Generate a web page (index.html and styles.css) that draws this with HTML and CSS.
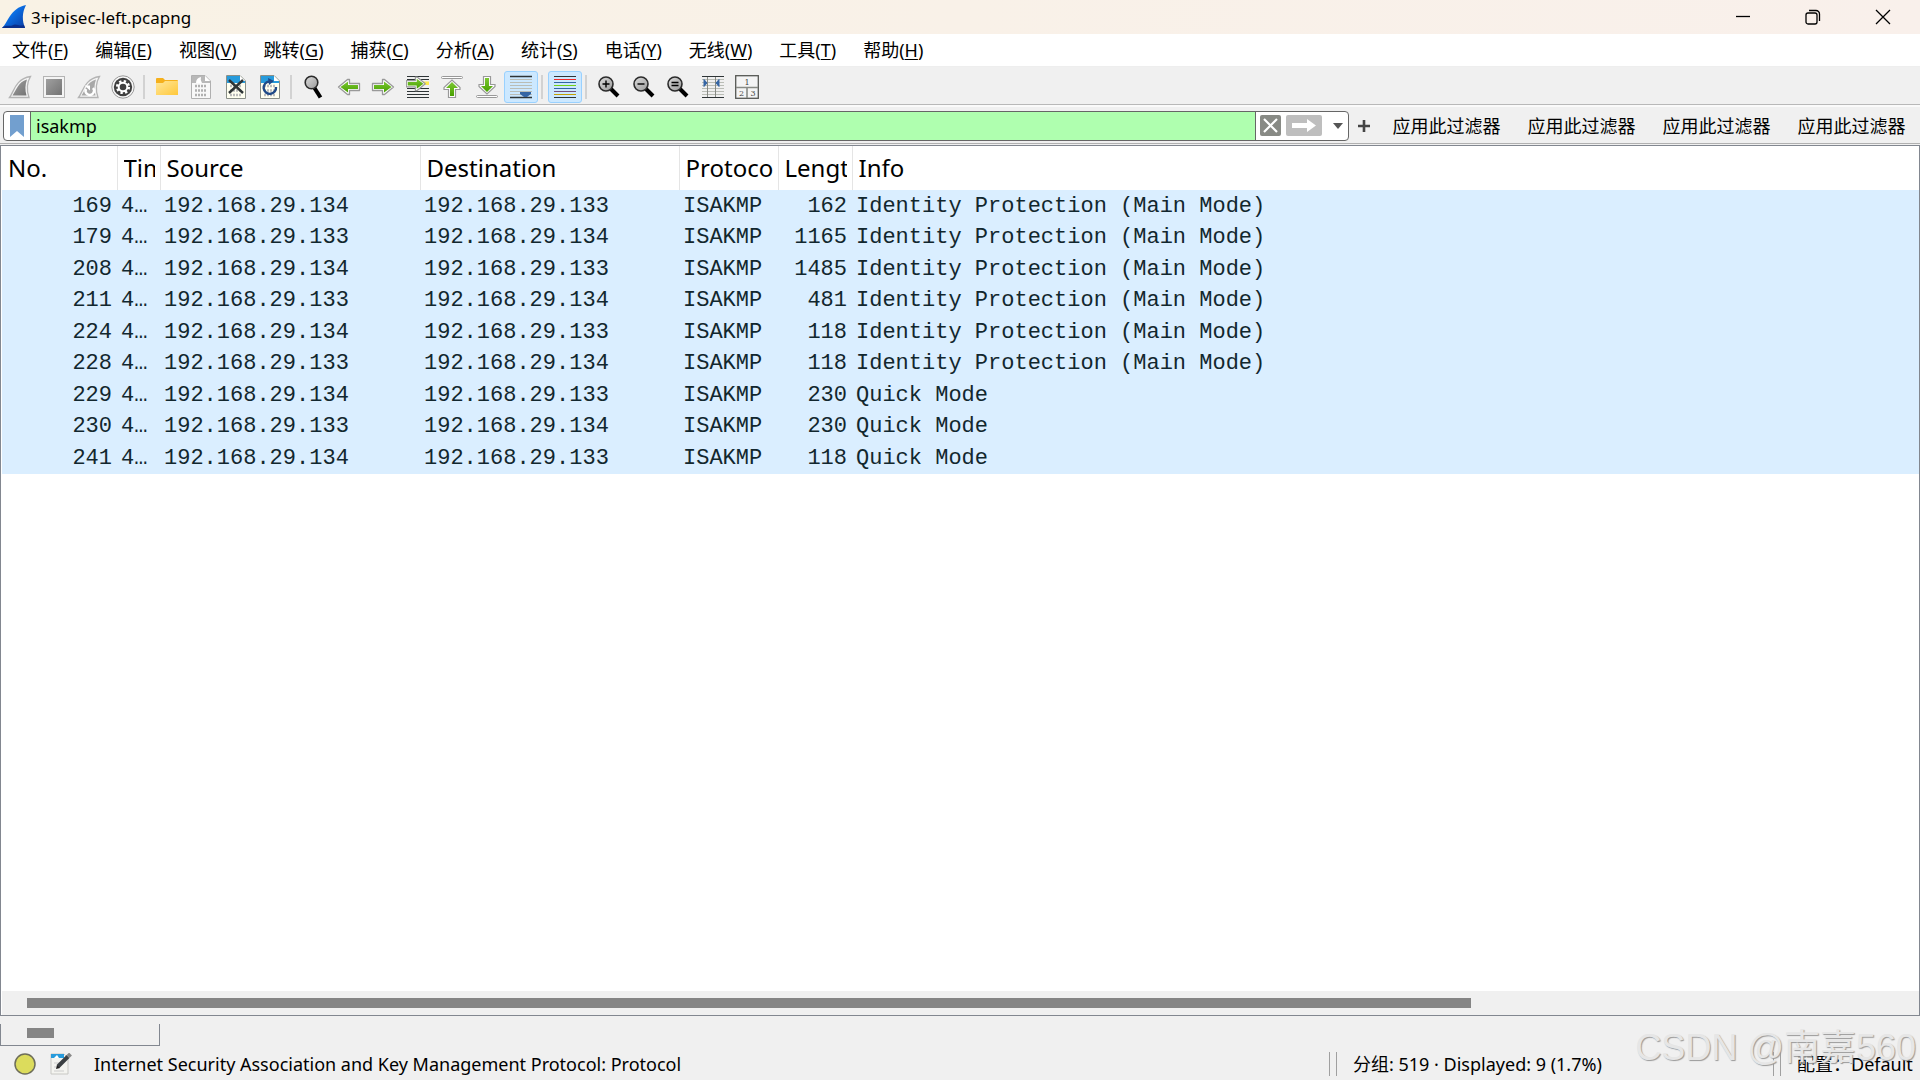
FILE: index.html
```html
<!DOCTYPE html>
<html lang="zh-CN">
<head>
<meta charset="utf-8">
<title>3+ipisec-left.pcapng</title>
<link rel="stylesheet" href="styles.css">
</head>
<body>
<svg class="defs" width="0" height="0" aria-hidden="true">
  <defs>
    <linearGradient id="blue" x1="0" y1="0" x2="1" y2="1"><stop offset="0" stop-color="#3aa0f5"/><stop offset=".45" stop-color="#0a6be0"/><stop offset="1" stop-color="#0b3aa0"/></linearGradient>
    <linearGradient id="grey" x1="0" y1="0" x2="1" y2="1"><stop offset="0" stop-color="#a0a0a0"/><stop offset="1" stop-color="#737373"/></linearGradient>
    <linearGradient id="green" x1="0" y1="0" x2="0" y2="1"><stop offset="0" stop-color="#7cc832"/><stop offset="1" stop-color="#48a000"/></linearGradient>
    <linearGradient id="gold" x1="0" y1="0" x2="1" y2="1"><stop offset="0" stop-color="#ffe79b"/><stop offset="1" stop-color="#ffc83a"/></linearGradient>
    <linearGradient id="glass" x1="0" y1="0" x2="1" y2="1"><stop offset="0" stop-color="#dcdcdc"/><stop offset="1" stop-color="#9a9a9a"/></linearGradient>
    <symbol id="lens" viewBox="0 0 24 24">
      <path d="M14 14l7 7" stroke="#000" stroke-width="4" fill="none"/>
      <circle cx="9" cy="9" r="7" fill="url(#glass)" stroke="#2b2b2b" stroke-width="1.600"/>
    </symbol>
    <symbol id="arrow" viewBox="0 0 24 24">
      <path d="M1.500 8.500H11.500V4.500H13.500L22.500 12L13.500 19.500H11.500V15.500H1.500Z" fill="#fff" stroke="#999" stroke-width="1.300" stroke-linejoin="round"/>
      <path d="M3 10H13V6.500L20.500 12L13 17.500V14H3Z" fill="url(#green)"/>
    </symbol>
  </defs>
</svg>
<div class="window">
  <header class="titlebar">
    <svg class="app-icon" viewBox="0 0 24 24"><path d="M0 23C6 18 8 3 24 0C20 8 20 15 23 23Z" fill="url(#blue)"/><path d="M0 23C3 19 8 22 11 20S18 22 22 20L23 23Z" fill="#0a2f8c"/></svg>
    <h1 class="title">3+ipisec-left.pcapng</h1>
    <div class="window-buttons">
      <button class="window-button" aria-label="最小化"><svg viewBox="0 0 16 16"><path d="M1 7.500H15" class="glyph"/></svg></button>
      <button class="window-button" aria-label="还原"><svg viewBox="0 0 16 16"><rect x="1" y="4" width="11" height="11" rx="2" class="glyph"/><path d="M4 1.500H11A3.500 3.500 0 0 1 14.500 5V12" class="glyph"/></svg></button>
      <button class="window-button" aria-label="关闭"><svg viewBox="0 0 16 16"><path d="M1 1L15 15M15 1L1 15" class="glyph"/></svg></button>
    </div>
  </header>

  <nav class="menubar">
    <button class="menu">文件(<u>F</u>)</button>
    <button class="menu">编辑(<u>E</u>)</button>
    <button class="menu">视图(<u>V</u>)</button>
    <button class="menu">跳转(<u>G</u>)</button>
    <button class="menu">捕获(<u>C</u>)</button>
    <button class="menu">分析(<u>A</u>)</button>
    <button class="menu">统计(<u>S</u>)</button>
    <button class="menu">电话(<u>Y</u>)</button>
    <button class="menu">无线(<u>W</u>)</button>
    <button class="menu">工具(<u>T</u>)</button>
    <button class="menu">帮助(<u>H</u>)</button>
  </nav>

  <div class="toolbar" role="toolbar">
    <div class="group group-4">
      <button class="tool" aria-label="开始捕获"><svg viewBox="0 0 24 24"><path d="M1.500 22.500C6 17 7 4 22.500 1.500C18.500 8 18.500 15 21 22.500Z" fill="#f4f4f4" stroke="#b4b4b4" stroke-width="1.300"/><path d="M4.500 20.500C8.500 15 10 7 19 4.500C17 10 17 15 18.500 20.500Z" fill="url(#grey)"/></svg></button>
      <button class="tool" aria-label="停止捕获"><svg viewBox="0 0 24 24"><rect x="1.500" y="1.500" width="21" height="21" fill="#f4f4f4" stroke="#b4b4b4"/><rect x="4" y="4" width="16" height="16" fill="url(#grey)"/></svg></button>
      <button class="tool" aria-label="重新开始捕获"><svg viewBox="0 0 24 24"><path d="M1.500 22.500C6 17 7 4 22.500 1.500C18.500 8 18.500 15 21 22.500Z" fill="#f4f4f4" stroke="#b4b4b4" stroke-width="1.300"/><path d="M4.500 20.500C8.500 15 10 7 19 4.500C17 10 17 15 18.500 20.500Z" fill="#a8a8a8"/><path d="M9 14A4.200 4.200 0 1 0 16 13" fill="none" stroke="#fff" stroke-width="2.400"/><path d="M7.500 10.500H13V15.500Z" fill="#fff"/></svg></button>
      <button class="tool" aria-label="捕获选项"><svg viewBox="0 0 24 24"><circle cx="12" cy="12" r="11.200" fill="#f8f8f8" stroke="#999"/><circle cx="12" cy="12" r="9.200" fill="#404040"/><circle cx="12" cy="12" r="5.600" fill="none" stroke="#fff" stroke-width="3" stroke-dasharray="2.200 2.200"/><circle cx="12" cy="12" r="4.300" fill="#404040" stroke="#fff" stroke-width="2"/></svg></button>
    </div>
    <div class="separator"></div>
    <div class="group group-4">
      <button class="tool" aria-label="打开"><svg viewBox="0 0 24 24"><path d="M1 4Q1 3 2 3H8L10 5H22Q23 5 23 6V12H1Z" fill="#f5b01c"/><path d="M1 8H8L10 6H23V20H1Z" fill="url(#gold)"/></svg></button>
      <button class="tool" aria-label="保存"><svg viewBox="0 0 24 24"><path d="M2.500 .5H16L21.500 6V23.500H2.500Z" fill="#f8f8f8" stroke="#b0b0b0"/><path d="M3 1H16V6H21V8H3Z" fill="#b8b8b8"/><path d="M7 8Q7 3 12 2Q11 5 13 8M16 1L21 6H16Z" fill="#fff"/><path d="M6 11H18M6 15.500H18M6 20H18" stroke="#b0b0b0" stroke-width="2.600" stroke-dasharray="2 1"/></svg></button>
      <button class="tool" aria-label="关闭文件"><svg viewBox="0 0 24 24"><path d="M2.500 .5H16L21.500 6V23.500H2.500Z" fill="#fffff0" stroke="#8a8f88"/><path d="M3 1H16V6H21V8H3Z" fill="#279bdc"/><path d="M16 1L21 6H16Z" fill="#fff"/><path d="M6 11H18M6 15.500H18M6 20H18" stroke="#bbb" stroke-width="2.600" stroke-dasharray="2 1"/><path d="M5 5L19 18M19 5L5 18" stroke="#2e3436" stroke-width="2.400"/></svg></button>
      <button class="tool" aria-label="重新加载"><svg viewBox="0 0 24 24"><path d="M2.500 .5H16L21.500 6V23.500H2.500Z" fill="#fffff0" stroke="#8a8f88"/><path d="M3 1H16V6H21V8H3Z" fill="#279bdc"/><path d="M16 1L21 6H16Z" fill="#fff"/><path d="M6 11H18M6 15.500H18M6 20H18" stroke="#bbb" stroke-width="2.600" stroke-dasharray="2 1"/><path d="M11 6.500A6.200 6.200 0 1 0 18 12" fill="none" stroke="#204a87" stroke-width="2.400"/><path d="M10 3L16 6L11 10Z" fill="#204a87"/></svg></button>
    </div>
    <div class="separator"></div>
    <div class="group group-7">
      <button class="tool" aria-label="查找分组"><svg viewBox="0 0 24 24"><path d="M12.500 13L18.500 22.500" stroke="#000" stroke-width="4"/><circle cx="9.500" cy="7.500" r="6.300" fill="url(#glass)" stroke="#2b2b2b" stroke-width="1.600"/></svg></button>
      <button class="tool" aria-label="后退"><svg viewBox="0 0 24 24"><g transform="matrix(-1 0 0 1 24 0)"><use href="#arrow"/></g></svg></button>
      <button class="tool" aria-label="前进"><svg viewBox="0 0 24 24"><use href="#arrow"/></svg></button>
      <button class="tool" aria-label="转到分组"><svg viewBox="0 0 24 24"><path d="M1 1.500H23M1 4.500H23M1 13.500H23M1 16.500H23M1 19.500H23M1 22.500H23" stroke="#2e3436"/><path d="M14 6.500H23V10H14Z" fill="#fce94f"/><g transform="translate(-1 -2) scale(.9)"><use href="#arrow" width="24" height="24"/></g></svg></button>
      <button class="tool" aria-label="第一个分组"><svg viewBox="0 0 24 24"><rect x="1.500" y="1.500" width="21" height="2" rx="1" fill="#fff" stroke="#999"/><path d="M8.500 22.500V14.500H4V12.500L12 5L20 12.500V14.500H15.500V22.500Z" fill="#fff" stroke="#999" stroke-width="1.200"/><path d="M10 21V13H6L12 7L18 13H14V21Z" fill="url(#green)"/></svg></button>
      <button class="tool" aria-label="最新分组"><svg viewBox="0 0 24 24"><rect x="1.500" y="20.500" width="21" height="2" rx="1" fill="#fff" stroke="#999"/><path d="M8.500 1.500V9.500H4V11.500L12 19L20 11.500V9.500H15.500V1.500Z" fill="#fff" stroke="#999" stroke-width="1.200"/><path d="M10 3V11H6L12 17L18 11H14V3Z" fill="url(#green)"/></svg></button>
      <button class="tool pressed" aria-label="自动滚动" aria-pressed="true"><svg viewBox="0 0 24 24"><path d="M1 4.500H23M1 7.500H23M1 10.500H23M1 13.500H23M1 16.500H23M1 19.500H23" stroke="#babdb6"/><path d="M1 1.500H23M1 22.500H23" stroke="#2e3436" stroke-width="1.300"/><path d="M11 17H22V19L18 22H15L11 19Z" fill="#3465a4"/></svg></button>
    </div>
    <div class="separator"></div>
    <div class="group">
      <button class="tool pressed" aria-label="着色分组" aria-pressed="true"><svg viewBox="0 0 24 24"><path d="M1 1.500H23M1 22.500H23" stroke="#2e3436"/><path d="M1 4.500H23" stroke="#ef2929"/><path d="M1 7.500H23" stroke="#3465a4"/><path d="M1 10.500H23" stroke="#73d216"/><path d="M1 13.500H23" stroke="#3465a4"/><path d="M1 16.500H23" stroke="#75507b"/><path d="M1 19.500H23" stroke="#c4a000"/></svg></button>
    </div>
    <div class="separator"></div>
    <div class="group group-5">
      <button class="tool" aria-label="放大"><svg viewBox="0 0 24 24"><use href="#lens"/><path d="M5.500 9H12.500M9 5.500V12.500" stroke="#000" stroke-width="1.400"/></svg></button>
      <button class="tool" aria-label="缩小"><svg viewBox="0 0 24 24"><use href="#lens"/><path d="M5.500 9H12.500" stroke="#000" stroke-width="1.400"/></svg></button>
      <button class="tool" aria-label="普通大小"><svg viewBox="0 0 24 24"><use href="#lens"/><path d="M5.500 7.500H12.500M5.500 10.500H12.500" stroke="#000" stroke-width="1.400"/></svg></button>
      <button class="tool" aria-label="调整列宽"><svg viewBox="0 0 24 24"><path d="M1 4.500H23M1 7.500H23M1 10.500H23M1 13.500H23M1 16.500H23M1 19.500H23" stroke="#babdb6"/><path d="M1 1.500H23M1 22.500H23" stroke="#2e3436"/><path d="M6.500 2V22M14.500 2V22" stroke="#888a85"/><path d="M3 4.500L6 8L3 11.500ZM18 4.500L15 8L18 11.500Z" fill="#3465a4" stroke="#3465a4"/></svg></button>
      <button class="tool" aria-label="布局"><svg viewBox="0 0 24 24"><rect x=".7" y=".7" width="22.600" height="22.600" fill="#f4f4f4" stroke="#555753" stroke-width="1.300"/><path d="M1 12.500H23M12 12.500V23" stroke="#888a85" stroke-width="1.600"/><text x="12" y="9.500" class="pane-number">1</text><text x="6.500" y="21" class="pane-number">2</text><text x="18" y="21" class="pane-number">3</text></svg></button>
    </div>
  </div>

  <form class="filterbar">
    <div class="filter-box">
      <button type="button" class="bookmark" aria-label="书签"><svg viewBox="0 0 14 22"><path d="M0 0H14V22L7 16L0 22Z" fill="#729fcf"/></svg></button>
      <input class="filter-input" type="text" value="isakmp" aria-label="显示过滤器">
      <div class="filter-actions">
        <button type="button" class="clear" aria-label="清除"><svg viewBox="0 0 21 21"><rect width="21" height="21" rx="2" fill="#888a85"/><path d="M4 4L17 17M17 4L4 17" stroke="#fff" stroke-width="2.200"/></svg></button>
        <button type="button" class="apply" aria-label="应用"><svg viewBox="0 0 36 21"><rect width="36" height="21" rx="2" fill="#bebebe"/><path d="M6 8H21V4L30 10.500L21 17V13H6Z" fill="#fff"/></svg></button>
        <button type="button" class="history" aria-label="历史"><svg viewBox="0 0 12 8"><path d="M1 1H11L6 7Z" fill="#555"/></svg></button>
      </div>
    </div>
    <button type="button" class="add" aria-label="添加按钮"><svg viewBox="0 0 12 12"><path d="M0 6H12M6 0V12" stroke="#444" stroke-width="2.600"/></svg></button>
    <button type="button" class="filter-button">应用此过滤器</button>
    <button type="button" class="filter-button">应用此过滤器</button>
    <button type="button" class="filter-button">应用此过滤器</button>
    <button type="button" class="filter-button">应用此过滤器</button>
  </form>

  <main class="packet-pane">
    <table class="packets">
      <colgroup><col class="c-no"><col class="c-time"><col class="c-source"><col class="c-dest"><col class="c-protocol"><col class="c-length"><col></colgroup>
      <thead>
        <tr><th><div>No.</div></th><th><div>Time</div></th><th><div>Source</div></th><th><div>Destination</div></th><th><div>Protocol</div></th><th><div>Length</div></th><th><div>Info</div></th></tr>
      </thead>
      <tbody>
        <tr><td class="num">169</td><td>4…</td><td>192.168.29.134</td><td>192.168.29.133</td><td>ISAKMP</td><td class="num">162</td><td>Identity Protection (Main Mode)</td></tr>
        <tr><td class="num">179</td><td>4…</td><td>192.168.29.133</td><td>192.168.29.134</td><td>ISAKMP</td><td class="num">1165</td><td>Identity Protection (Main Mode)</td></tr>
        <tr><td class="num">208</td><td>4…</td><td>192.168.29.134</td><td>192.168.29.133</td><td>ISAKMP</td><td class="num">1485</td><td>Identity Protection (Main Mode)</td></tr>
        <tr><td class="num">211</td><td>4…</td><td>192.168.29.133</td><td>192.168.29.134</td><td>ISAKMP</td><td class="num">481</td><td>Identity Protection (Main Mode)</td></tr>
        <tr><td class="num">224</td><td>4…</td><td>192.168.29.134</td><td>192.168.29.133</td><td>ISAKMP</td><td class="num">118</td><td>Identity Protection (Main Mode)</td></tr>
        <tr><td class="num">228</td><td>4…</td><td>192.168.29.133</td><td>192.168.29.134</td><td>ISAKMP</td><td class="num">118</td><td>Identity Protection (Main Mode)</td></tr>
        <tr><td class="num">229</td><td>4…</td><td>192.168.29.134</td><td>192.168.29.133</td><td>ISAKMP</td><td class="num">230</td><td>Quick Mode</td></tr>
        <tr><td class="num">230</td><td>4…</td><td>192.168.29.133</td><td>192.168.29.134</td><td>ISAKMP</td><td class="num">230</td><td>Quick Mode</td></tr>
        <tr><td class="num">241</td><td>4…</td><td>192.168.29.134</td><td>192.168.29.133</td><td>ISAKMP</td><td class="num">118</td><td>Quick Mode</td></tr>
      </tbody>
    </table>
    <div class="scrollbar"><div class="thumb"></div></div>
  </main>

  <div class="detail-pane"><div class="detail-thumb"></div></div>

  <footer class="statusbar">
    <button class="status-icon" aria-label="专家信息"><svg viewBox="0 0 22 22"><circle cx="11" cy="11" r="10" fill="#dcdc5c" stroke="#6e6e5a" stroke-width="1.500"/></svg></button>
    <button class="status-icon" aria-label="捕获文件注释"><svg viewBox="0 0 22 22"><path d="M1 1H14L18 5V21H1Z" fill="#f4f4f0" stroke="#c8c8c4"/><path d="M1 1H14V5H1Z" fill="#279bdc"/><path d="M4 5L7 2L9 5Z" fill="#fff"/><path d="M4 10H12M4 14H9M4 18H14" stroke="#ccc"/><path d="M8 13.500L18 3.500" stroke="#3c4043" stroke-width="4"/><path d="M18 3.500L20.500 1" stroke="#888" stroke-width="4"/><path d="M6 16L7 12L10 15Z" fill="#222"/></svg></button>
    <span class="status-text">Internet Security Association and Key Management Protocol: Protocol</span>
    <span class="status-cell packets-cell">分组: 519 · Displayed: 9 (1.7%)</span>
    <span class="status-cell profile-cell">配置：Default</span>
  </footer>
  <div class="watermark">CSDN @南嘉560</div>
</div>
</body>
</html>
```
FILE: styles.css
```css
* { box-sizing: border-box; }

body {
  margin: 0;
  background: #f0f0f0;
  color: #000;
  font: 18px/24px "Noto Sans", "Noto Sans CJK SC", sans-serif;
}

button, input {
  margin: 0;
  padding: 0;
  border: 0;
  background: none;
  color: inherit;
  font: inherit;
}

svg { display: block; }
.defs { position: absolute; }

.window {
  display: flex;
  flex-direction: column;
  height: 100vh;
  overflow: hidden;
  position: relative;
}

/* Title bar */
.titlebar {
  display: flex;
  align-items: center;
  height: 34px;
  padding: 0 2px;
  background: linear-gradient(90deg, #f9f2e5, #f9f0eb);
}
.app-icon { width: 24px; height: 24px; }
.title {
  margin: 0;
  padding: 1px 0 0 5px;
  flex: 1;
  font-size: 17px;
  font-weight: 400;
}
.window-buttons { display: flex; }
.window-button {
  display: grid;
  place-items: center;
  width: 70px;
  height: 34px;
}
.window-button svg { width: 16px; height: 16px; }
.glyph { fill: none; stroke: #000; stroke-width: 1.3; }

/* Menus */
.menubar {
  display: flex;
  gap: 1px;
  height: 33px;
  background: #fff;
  border-bottom: 1px solid #eee;
}
.menu {
  padding: 0 13px;
  white-space: nowrap;
}
.menu:first-child { padding-left: 12px; }
.menu u { text-underline-offset: 2px; text-decoration-thickness: 1px; }

/* Main toolbar */
.toolbar {
  display: flex;
  align-items: center;
  height: 38px;
  padding: 3px 0 0 3px;
  border-bottom: 1px solid #b8b8b8;
}
.group { display: flex; justify-content: space-between; }
.group-4 { width: 137px; }
.group-5 { width: 172px; }
.group-7 { width: 241px; }
.tool {
  display: grid;
  place-items: center;
  width: 34px;
  height: 32px;
  border: 1px solid transparent;
  border-radius: 3px;
}
.tool svg { width: 24px; height: 24px; }
.pressed { background: #cce8ff; border-color: #99d1ff; }
.separator {
  width: 2px;
  height: 24px;
  margin: 0 5px 0 3px;
  background: #d2d2d2;
}
.pane-number {
  font: 8px "DejaVu Serif", serif;
  text-anchor: middle;
  fill: #444;
}

/* Display filter */
.filterbar {
  display: flex;
  align-items: center;
  height: 39px;
  padding: 1px 1px 0 3px;
  border-top: 2px solid #fafafa;
  border-bottom: 1px solid #b0b0b0;
}
.filter-box {
  display: flex;
  flex: 1;
  height: 30px;
  border: 1px solid #666;
  border-radius: 4px;
  background: #fff;
  overflow: hidden;
}
.bookmark {
  display: grid;
  place-items: center;
  width: 27px;
  border-right: 1px solid #666;
}
.bookmark svg { width: 14px; height: 22px; }
.filter-input {
  flex: 1;
  min-width: 0;
  padding: 0 5px;
  background: #afffaf;
  outline: 0;
}
.filter-actions {
  display: flex;
  align-items: center;
  gap: 5px;
  padding: 0 4px;
  border-left: 1px solid #666;
}
.clear svg { width: 21px; height: 21px; }
.apply svg { width: 36px; height: 21px; }
.history svg { width: 12px; height: 8px; margin-left: 5px; }
.add {
  display: grid;
  place-items: center;
  width: 30px;
}
.add svg { width: 12px; height: 12px; }
.filter-button { width: 135px; white-space: nowrap; }

/* Packet list */
.packet-pane {
  display: flex;
  flex: 1;
  flex-direction: column;
  margin-top: 1px;
  border: 1px solid #828790;
  background: #fff;
  padding-left: 1px;
}
.packets {
  width: 100%;
  table-layout: fixed;
  border-collapse: collapse;
}
.c-no { width: 115px; }
.c-time { width: 43px; }
.c-source { width: 260px; }
.c-dest { width: 259px; }
.c-protocol { width: 99px; }
.c-length { width: 74px; }
th {
  height: 44px;
  padding: 0 5px 0 6px;
  border-right: 1px solid #e5e5e5;
  font-size: 24px;
  font-weight: 400;
  line-height: 32px;
  text-align: left;
}
th:last-child { border-right: 0; }
th div { overflow: hidden; white-space: nowrap; }
td {
  height: 31px;
  padding: 1px 5px 0 4px;
  background: #daeeff;
  color: #12272e;
  font: 22px/28px "Liberation Mono", monospace;
  white-space: nowrap;
}
tbody tr:nth-child(odd) td { height: 32px; }
.num { text-align: right; }
.scrollbar {
  height: 24px;
  margin-top: auto;
  padding: 7px 448px 7px 25px;
  background: #f0f0f0;
}
.thumb { height: 10px; background: #858585; }

/* Collapsed detail pane */
.detail-pane {
  width: 160px;
  height: 22px;
  margin-top: 8px;
  padding: 4px 0 0 26px;
  border: 1px solid #828790;
  border-top: 0;
}
.detail-thumb { width: 27px; height: 10px; background: #858585; }

/* Status bar */
.statusbar {
  display: flex;
  align-items: center;
  height: 34px;
  padding: 2px 0 0 14px;
}
.status-icon { width: 36px; }
.status-icon svg { width: 22px; height: 22px; }
.status-text { flex: 1; padding-left: 8px; }
.status-cell {
  padding-left: 16px;
  border-left: 1px solid #a0a0a0;
  box-shadow: -6px 0 0 0 #f0f0f0, -7px 0 0 0 #a0a0a0;
  white-space: nowrap;
}
.packets-cell { width: 444px; }
.profile-cell { width: 140px; }

.watermark {
  position: absolute;
  right: 4px;
  bottom: 9px;
  color: #e6e6e6;
  font: 36px/46px "Liberation Sans", "Noto Sans CJK SC", sans-serif;
  text-shadow: 1px 1px 1px #999;
  pointer-events: none;
}
```
